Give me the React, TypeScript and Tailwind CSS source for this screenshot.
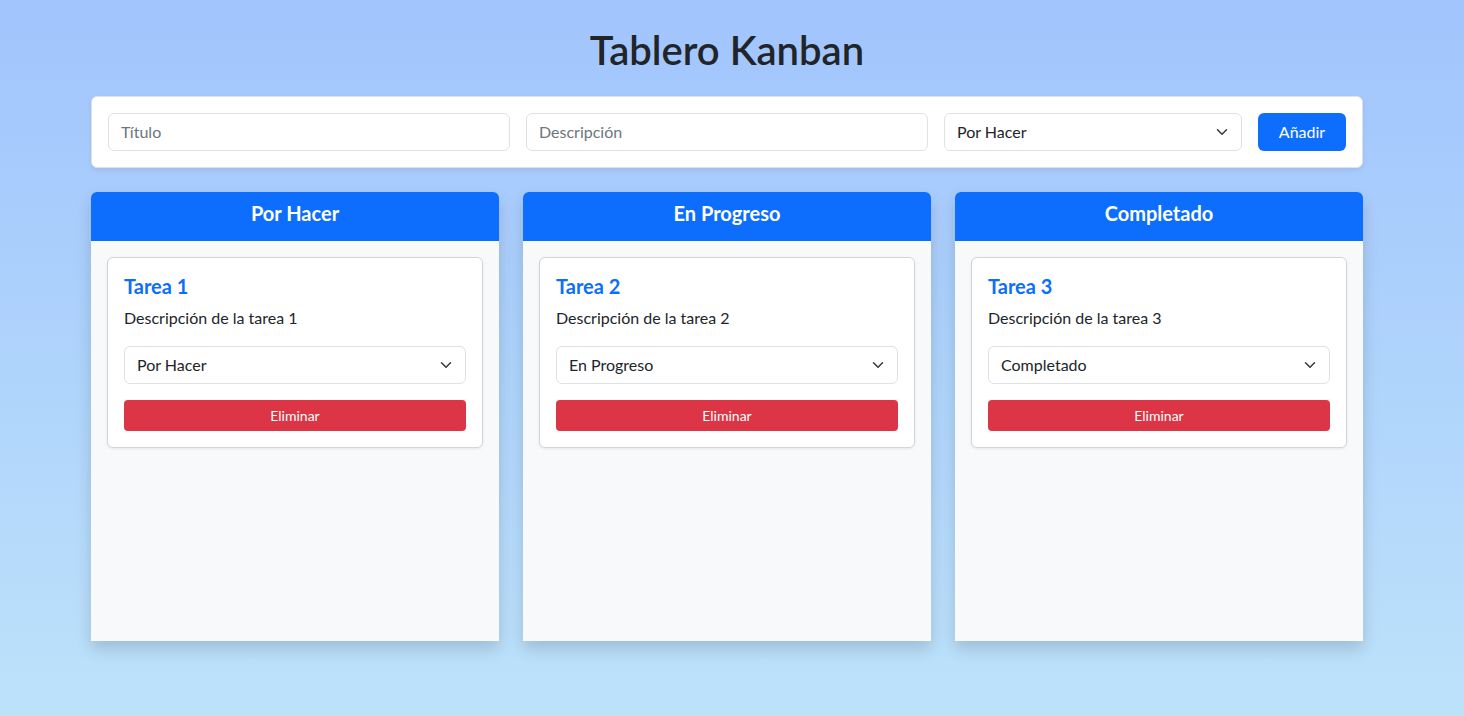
import React from "react";

const font = { fontFamily: '"Lato", "Noto Sans", "Liberation Sans", sans-serif' };

function Chevron() {
  return (
    <svg width="12" height="12" viewBox="0 0 16 16" className="absolute right-[14px] top-1/2 -translate-y-1/2 pointer-events-none">
      <path d="M2 5l6 6 6-6" fill="none" stroke="#343a40" strokeWidth="2" strokeLinecap="round" strokeLinejoin="round" />
    </svg>
  );
}

function Select({ value, className }: { value: string; className: string }) {
  return (
    <div className={"relative " + className}>
      <div className="h-[38px] w-full rounded-[6px] border border-[#dee2e6] bg-white pl-3 pr-9 flex items-center text-[16px] text-[#212529]">
        {value}
      </div>
      <Chevron />
    </div>
  );
}

const columns = [
  { title: "Por Hacer", task: "Tarea 1", desc: "Descripción de la tarea 1" },
  { title: "En Progreso", task: "Tarea 2", desc: "Descripción de la tarea 2" },
  { title: "Completado", task: "Tarea 3", desc: "Descripción de la tarea 3" },
];

export default function App() {
  return (
    <div className="min-h-[716px] w-full bg-[linear-gradient(to_bottom,#a1c4fd,#bce2fa)]" style={font}>
      <div className="ml-[91px] w-[1272px] pt-[26px]">
        <h1 className="text-center text-[40px] leading-[48px] font-semibold text-[#212529] mb-[22px]">Tablero Kanban</h1>
        <div className="bg-white rounded-[6px] border border-[#dee2e6] shadow-[0_2px_4px_rgba(0,0,0,0.075)] p-4 flex gap-4">
          <div className="flex-1 h-[38px] rounded-[6px] border border-[#dee2e6] px-3 flex items-center text-[16px] text-[#6c757d]">Título</div>
          <div className="flex-1 h-[38px] rounded-[6px] border border-[#dee2e6] px-3 flex items-center text-[16px] text-[#6c757d]">Descripción</div>
          <Select value="Por Hacer" className="w-[298px]" />
          <button className="h-[38px] w-[88px] rounded-[6px] bg-[#0d6efd] text-white text-[16px]">Añadir</button>
        </div>
        <div className="mt-[24px] grid grid-cols-3 gap-[24px]">
          {columns.map((c) => (
            <div key={c.title} className="shadow-[0_8px_16px_rgba(0,0,0,0.15)] rounded-t-[6px]">
              <div className="h-[49px] pb-[7px] bg-[#0d6efd] rounded-t-[6px] flex items-center justify-center text-white text-[20px] font-bold">
                {c.title}
              </div>
              <div className="bg-[#f8f9fa] min-h-[400px] p-4">
                <div className="bg-white border border-[#d3d6d9] rounded-[6px] shadow-[0_1px_3px_rgba(0,0,0,0.08)] p-4">
                  <h5 className="text-[20px] leading-[24px] font-bold text-[#0d6efd] mb-2">{c.task}</h5>
                  <p className="text-[16px] leading-[24px] text-[#212529] mb-4">{c.desc}</p>
                  <Select value={c.title} className="w-full" />
                  <button className="mt-4 w-full h-[31px] rounded-[4px] bg-[#dc3545] text-white text-[14px]">Eliminar</button>
                </div>
              </div>
            </div>
          ))}
        </div>
      </div>
    </div>
  );
}
